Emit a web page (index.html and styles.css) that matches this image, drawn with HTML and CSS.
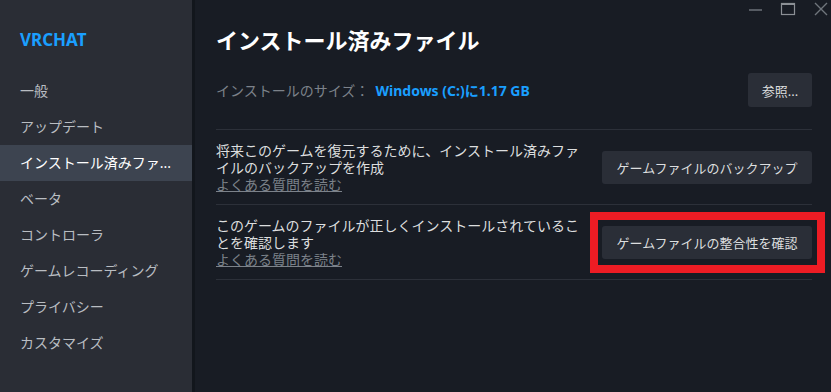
FILE: index.html
```html
<!DOCTYPE html>
<html lang="ja">
<head>
    <meta charset="UTF-8">
    <meta name="viewport" content="width=device-width, initial-scale=1.0">
    <title>VRCHAT - プロパティ</title>
    <link rel="stylesheet" href="styles.css">
</head>
<body>

    <div class="window">
        <!-- Barre latérale -->
        <nav class="sidebar">
            <div class="game-name">VRCHAT</div>
            <ul class="menu">
                <li>一般</li>
                <li>アップデート</li>
                <li class="active">インストール済みファ...</li>
                <li>ベータ</li>
                <li>コントローラ</li>
                <li>ゲームレコーディング</li>
                <li>プライバシー</li>
                <li>カスタマイズ</li>
            </ul>
        </nav>

        <!-- Contenu principal -->
        <main class="content">
            <h1>インストール済みファイル</h1>

            <div class="size-row">
                <div class="size-info">
                    <span class="size-label">インストールのサイズ：</span>
                    <span class="size-value">Windows (C:)に1.17 GB</span>
                </div>
                <button class="btn btn-small">参照...</button>
            </div>

            <div class="option-row">
                <div class="option-text">
                    <p>将来このゲームを復元するために、インストール済みファイルのバックアップを作成</p>
                    <a href="#" class="faq">よくある質問を読む</a>
                </div>
                <button class="btn">ゲームファイルのバックアップ</button>
            </div>

            <div class="option-row">
                <div class="option-text">
                    <p>このゲームのファイルが正しくインストールされていることを確認します</p>
                    <a href="#" class="faq">よくある質問を読む</a>
                </div>
                <div class="highlight">
                    <button class="btn">ゲームファイルの整合性を確認</button>
                </div>
            </div>
        </main>

        <!-- Boutons de la fenêtre -->
        <div class="window-controls">
            <svg width="16" height="16" viewBox="0 0 16 16">
                <line x1="2" y1="10" x2="15" y2="10" stroke="#6b7078" stroke-width="1.5"/>
            </svg>
            <svg width="16" height="16" viewBox="0 0 16 16">
                <rect x="1.5" y="3.5" width="13" height="11" fill="none" stroke="#8b8f95" stroke-width="1.2"/>
                <line x1="1.5" y1="4.2" x2="14.5" y2="4.2" stroke="#8b8f95" stroke-width="1.6"/>
            </svg>
            <svg width="16" height="16" viewBox="0 0 16 16">
                <path d="M2 3 L14 15 M14 3 L2 15" stroke="#6f757c" stroke-width="1.4"/>
            </svg>
        </div>
    </div>

</body>
</html>
```

FILE: styles.css
```css
/* Style de la page */
body {
    margin: 0;
    padding: 0;
    background-color: #181c24;
    font-family: "Noto Sans", "Noto Sans CJK JP", sans-serif;
}

.window {
    display: flex;
    width: 831px;
    height: 392px;
    position: relative;
    overflow: hidden;
}

/* Barre latérale */
.sidebar {
    width: 192px;
    flex-shrink: 0;
    background-color: #2a2d35;
    border-right: 3px solid #12161c;
}

.game-name {
    color: #1a9fff;
    font-weight: bold;
    font-size: 17px;
    line-height: 20px;
    padding: 30px 20px 0;
}

.menu {
    list-style: none;
    margin: 23px 0 0;
    padding: 0;
}

.menu li {
    height: 36px;
    line-height: 35px;
    padding-left: 20px;
    font-size: 14px;
    color: #b9bdc2;
    white-space: nowrap;
}

.menu li.active {
    background-color: #3d4450;
    color: #ffffff;
}

/* Contenu principal */
.content {
    flex: 1;
    padding: 26px 19px 0 21px;
}

h1 {
    margin: 0;
    font-size: 22px;
    line-height: 28px;
    font-weight: bold;
    color: #ffffff;
}

.size-row {
    display: flex;
    justify-content: space-between;
    align-items: center;
    margin-top: 19px;
    padding-bottom: 22px;
    border-bottom: 1px solid #2c3039;
}

.size-label {
    color: #7c828a;
    font-size: 14px;
}

.size-value {
    color: #1a9fff;
    font-size: 14px;
    font-weight: bold;
    margin-left: 2px;
}

.btn {
    font-family: "Noto Sans", "Noto Sans CJK JP", sans-serif;
    background-color: #2a2e37;
    color: #dcdedf;
    border: none;
    border-radius: 3px;
    font-size: 13px;
    width: 210px;
    height: 33px;
    padding: 0;
    cursor: pointer;
}

.btn-small {
    width: 64px;
    height: 34px;
}

.option-row {
    display: flex;
    justify-content: space-between;
    align-items: center;
    height: 74px;
    border-bottom: 1px solid #2c3039;
}

.option-text {
    width: 370px;
    font-size: 14px;
    line-height: 17px;
}

.option-text p {
    margin: 0;
    color: #dcdedf;
}

.faq {
    color: #7c828a;
    text-decoration: underline;
}

/* Encadré rouge autour du bouton */
.highlight {
    position: relative;
}

.highlight::after {
    content: "";
    position: absolute;
    top: -14px;
    left: -12px;
    right: -13px;
    bottom: -14px;
    border: 8px solid #ed1c24;
    pointer-events: none;
}

/* Boutons de la fenêtre */
.window-controls {
    position: absolute;
    top: 0;
    right: 2px;
    display: flex;
    gap: 17px;
}
```
